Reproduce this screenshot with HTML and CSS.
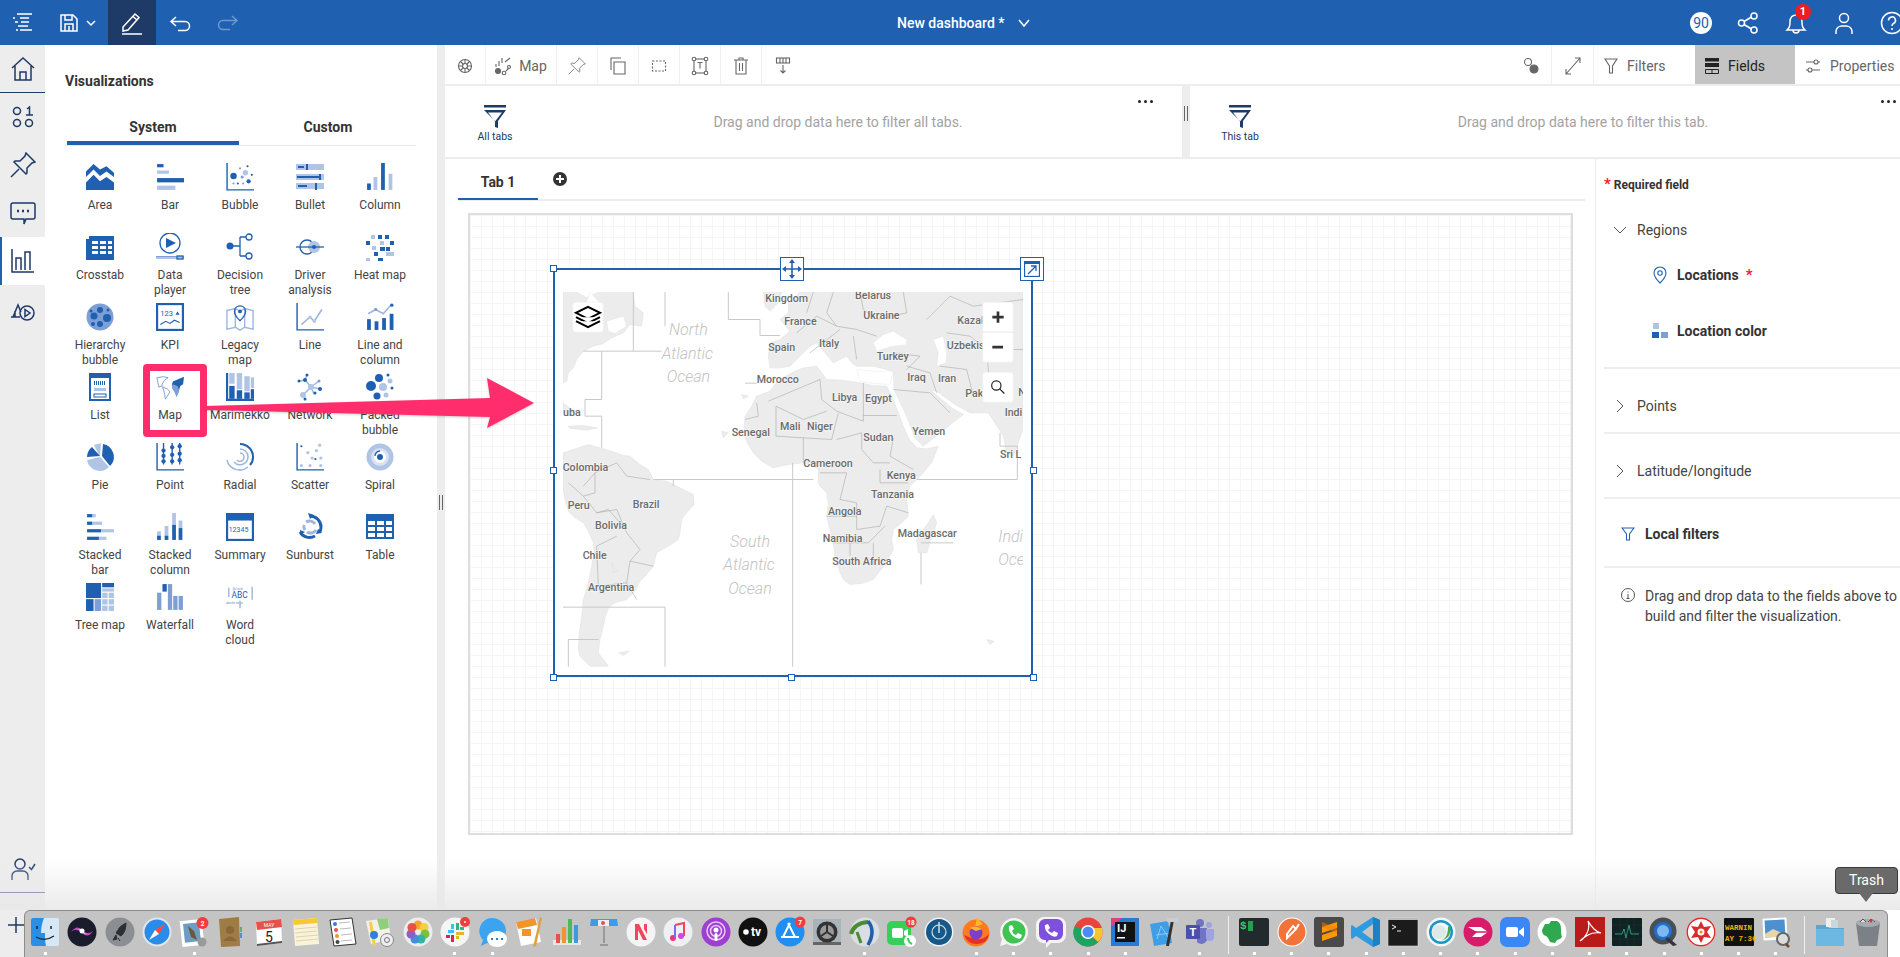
FILE: index.html
```html
<!DOCTYPE html>
<html lang="en">
<head>
<meta charset="utf-8">
<title>New dashboard</title>
<link rel="stylesheet" href="styles.css">
</head>
<body>
<div class="page">
  <header class="topbar">
    <div class="tb-left">
      <button class="hbtn w45"><svg width="24" height="24" viewBox="0 0 24 24" class="hline"><path d="M6 3h15M9 7h9M4 11h3M10 11h8M7 15h10M9 19h12M2 7h2M5 19h2"/></svg></button>
      <button class="hbtn w63"><svg width="20" height="20" viewBox="0 0 20 20" class="hline"><path d="M2 2h12l4 4v12H2zM6 2v5h7V2M6 18v-7h8v7M10 13v5"/></svg><svg width="10" height="10" viewBox="0 0 10 10" class="hline chev"><path d="M1 3l4 4 4-4"/></svg></button>
      <button class="hbtn w48 active"><svg width="24" height="24" viewBox="0 0 24 24" class="hline"><path d="M3 16L15 3l4 3.500L8 19l-5 1zM13 5.500l4 3.500M2 23h20"/></svg></button>
      <button class="hbtn w48"><svg width="22" height="22" viewBox="0 0 22 22" class="hline"><path d="M7 5L2 9.500 7 14M2 9.500h14a4 4 0 0 1 0 9H9"/></svg></button>
      <button class="hbtn w48 faded"><svg width="22" height="22" viewBox="0 0 22 22" class="hline"><path d="M15 4l5 4.500-5 4.500M20 8.500H6a4 4 0 0 0 0 9h7"/></svg></button>
    </div>
    <div class="doc-title"><span>New dashboard *</span><svg width="14" height="14" viewBox="0 0 14 14" class="hline"><path d="M2 4l5 6 5-6"/></svg></div>
    <div class="tb-right">
      <span class="quota">90</span>
      <svg width="24" height="24" viewBox="0 0 24 24" class="hline"><circle cx="5.500" cy="12" r="3"/><circle cx="18" cy="5" r="3"/><circle cx="18" cy="19" r="3"/><path d="M8 10.500l7.500-4.500M8 13.500l7.500 4.500"/></svg>
      <span class="bell"><svg width="24" height="24" viewBox="0 0 24 24" class="hline"><path d="M3 19c2-2 3-3 3-8s3-7 6-7 6 2 6 7 1 6 3 8zM9 19a3 3 0 0 0 6 0"/></svg><b class="badge">1</b></span>
      <svg width="24" height="24" viewBox="0 0 24 24" class="hline"><circle cx="12" cy="7" r="4.500"/><path d="M4 23v-3a6 6 0 0 1 6-5h4a6 6 0 0 1 6 5v3"/></svg>
      <svg width="24" height="24" viewBox="0 0 24 24" class="hline"><circle cx="12" cy="12" r="10.500"/><path d="M8.500 9.500a3.500 3.500 0 1 1 5 3c-1 .5-1.500 1-1.500 2.500M12 17v2"/></svg>
    </div>
  </header>

  <div class="body">
    <nav class="rail">
      <div class="rail-item sep"><svg width="26" height="26" viewBox="0 0 26 26" class="rline"><path d="M2 12L13 2l11 10M5 10v14h16V10M10 24v-8h6v8"/></svg></div>
      <div class="rail-item"><svg width="24" height="24" viewBox="0 0 24 24" class="rline"><circle cx="6" cy="6" r="3.500"/><circle cx="6" cy="18" r="3.500"/><circle cx="18" cy="18" r="3.500"/><path d="M16 4l2.500-2v8M15 10h7"/></svg></div>
      <div class="rail-item"><svg width="26" height="26" viewBox="0 0 26 26" class="rline"><path d="M1 25l8-8M16 1l9 9-3 1-5 5 0 5-1 1-12-12 1-1 5 0 5-5z"/></svg></div>
      <div class="rail-item"><svg width="26" height="26" viewBox="0 0 26 26" class="rline"><path d="M3 3h20a2 2 0 0 1 2 2v12a2 2 0 0 1-2 2h-7l-2 5v-5H3a2 2 0 0 1-2-2V5a2 2 0 0 1 2-2z"/><path d="M7 11h2M12 11h2M17 11h2" stroke-width="2.500"/></svg></div>
      <div class="rail-item current"><svg width="24" height="24" viewBox="0 0 24 24" class="rline"><path d="M1 0v23h22M5 21V9h5v12M14 21V3h5v18"/></svg></div>
      <div class="rail-item"><svg width="26" height="26" viewBox="0 0 26 26" class="rline"><path d="M1 21h9M3 21l5-12 3 7M5 21v-6"/><circle cx="17" cy="17" r="7"/><path d="M15 13.500l5 3.500-5 3.500z"/></svg></div>
      <div class="rail-item push sep"><svg width="26" height="26" viewBox="0 0 26 26" class="rline"><circle cx="10" cy="8" r="5"/><path d="M2 24v-4a5 5 0 0 1 5-5h6a5 5 0 0 1 5 5v4M19 11l2.500 2.500L25 8"/></svg></div>
      <div class="rail-item"><svg width="20" height="20" viewBox="0 0 20 20" class="rline"><path d="M10 2v16M2 10h16"/></svg></div>
    </nav>

    <aside class="panel">
      <h2 class="panel-title">Visualizations</h2>
      <div class="viz-tabs"><div class="viz-tab on">System</div><div class="viz-tab">Custom</div></div>
      <div class="viz-grid">
        <div class="tile"><svg viewBox="0 0 26 26" class="viz"><path class="d" d="M0 8L7 1l6 5 6-3 7 6v4l-7-5-6 4-6-6-7 7z"/><path class="d" d="M0 18l7-7 6 6 6-4 7 5v7H0z"/></svg><span>Area</span></div>
        <div class="tile"><svg viewBox="0 0 26 26" class="viz"><rect class="d" x="1" y="1" width="6" height="3"/><rect class="l" x="1" y="7" width="11" height="3"/><rect class="d" x="1" y="14" width="25" height="4"/><rect class="l" x="1" y="21" width="17" height="4"/></svg><span>Bar</span></div>
        <div class="tile"><svg viewBox="0 0 26 26" class="viz"><path class="b" d="M1 0v25h25"/><circle class="d" cx="7" cy="12" r="3"/><circle class="l" cx="18" cy="9" r="2.500"/><circle class="d" cx="21" cy="17" r="2"/><circle class="m" cx="13" cy="5" r="1"/><circle class="d" cx="20" cy="3" r="1"/><circle class="d" cx="24" cy="11" r="1"/><circle class="m" cx="15" cy="13" r="1.500"/><circle class="d" cx="11" cy="19" r="1"/><circle class="m" cx="16" cy="19" r="1"/><circle class="m" cx="7" cy="19" r="1"/></svg><span>Bubble</span></div>
        <div class="tile"><svg viewBox="0 0 28 26" class="viz"><rect class="l" x="0" y="0" width="28" height="6"/><rect class="l" x="0" y="10" width="28" height="6"/><rect class="l" x="0" y="19" width="28" height="6"/><rect class="d" x="2" y="2" width="6" height="2"/><rect class="d" x="10" y="0" width="2" height="6"/><rect class="d" x="1" y="12" width="23" height="2"/><rect class="d" x="23" y="10" width="2" height="6"/><rect class="d" x="2" y="21" width="9" height="2"/><rect class="d" x="19" y="19" width="2" height="7"/></svg><span>Bullet</span></div>
        <div class="tile"><svg viewBox="0 0 26 26" class="viz"><rect class="d" x="1" y="19" width="3.500" height="6"/><rect class="l" x="7" y="13" width="3.500" height="12"/><rect class="d" x="14" y="0" width="3.500" height="25"/><rect class="l" x="21" y="10" width="3.500" height="15"/></svg><span>Column</span></div>

        <div class="tile"><svg viewBox="0 0 28 26" class="viz"><path class="d" d="M0 5h3V2h25v24H0z"/><path class="w" d="M6 7h6v3H6zM14 7h6v3h-6zM22 7h4v3h-4zM6 12h6v3H6zM14 12h6v3h-6zM22 12h4v3h-4zM6 17h6v3H6zM14 17h6v3h-6zM22 17h4v3h-4z"/></svg><span>Crosstab</span></div>
        <div class="tile"><svg viewBox="0 0 28 28" class="viz"><circle class="b" cx="14" cy="10" r="10"/><path class="d" d="M10 5l10 5-10 5z"/><rect class="l" x="0" y="23" width="28" height="3"/><rect class="m" x="0" y="23" width="20" height="1"/><rect class="b" x="21" y="23" width="6" height="3"/></svg><span>Data<br>player</span></div>
        <div class="tile"><svg viewBox="0 0 28 28" class="viz"><circle class="d" cx="4" cy="13" r="3.500"/><circle class="b" cx="23" cy="4" r="3"/><circle class="b" cx="23" cy="23" r="3"/><path class="b" d="M4 13h10M14 4v19M14 4h6M14 23h6"/></svg><span>Decision<br>tree</span></div>
        <div class="tile"><svg viewBox="0 0 28 26" class="viz"><circle class="b" cx="11" cy="13" r="7"/><circle class="l" cx="18" cy="13" r="6"/><path class="b" d="M0 13h28"/><circle class="d" cx="18" cy="13" r="2"/></svg><span>Driver<br>analysis</span></div>
        <div class="tile"><svg viewBox="0 0 28 28" class="viz"><path class="d" d="M12 2h4v4h-4zM0 8h4v4H0zM24 8h4v4h-4zM14 14h5v4h-5zM8 19h4v4H8zM12 25h5v3h-5z"/><path class="l" d="M5 2h4v4H5zM14 8h4v4h-4zM6 13h4v4H6zM20 19h8v4h-8zM0 25h4v3H0z"/><path class="d" d="M19 2h4v4h-4zM20 14h4v4h-4z"/></svg><span>Heat map</span></div>

        <div class="tile"><svg viewBox="0 0 28 28" class="viz"><circle class="m" cx="14" cy="14" r="13.500"/><g class="d"><circle cx="14" cy="7" r="3"/><circle cx="21" cy="15" r="4"/><circle cx="8" cy="13" r="3.500"/><circle cx="14" cy="21" r="3"/><circle cx="5" cy="8" r="1.500"/><circle cx="22" cy="7" r="1.500"/><circle cx="7" cy="21" r="2"/></g></svg><span>Hierarchy<br>bubble</span></div>
        <div class="tile"><svg viewBox="0 0 26 26" class="viz"><rect class="b2" x="1" y="1" width="24" height="24"/><text x="4" y="12" class="kpi">123</text><path class="d" d="M18 11l2-3 2 3z"/><path class="b1" d="M4 20l5-3 4 2 4-3 5 2"/></svg><span>KPI</span></div>
        <div class="tile"><svg viewBox="0 0 30 28" class="viz"><path class="bl" d="M1 7l9-2 5 3 5-3 9 2v20l-9-2-5 3-5-3-9 2zM10 5v20M20 5v20"/><path class="b" d="M15 2a6 6 0 0 1 6 6c0 4-6 10-6 10S9 12 9 8a6 6 0 0 1 6-6z"/><circle class="d" cx="15" cy="8" r="2"/></svg><span>Legacy<br>map</span></div>
        <div class="tile"><svg viewBox="0 0 26 26" class="viz"><path class="b" d="M1 0v25h25"/><path class="bl" d="M5 20l8-7 4 4 7-11"/><circle class="l" cx="13" cy="13" r="1.500"/><circle class="l" cx="17" cy="17" r="1.500"/></svg><span>Line</span></div>
        <div class="tile"><svg viewBox="0 0 26 26" class="viz"><rect class="d" x="1" y="15" width="3.500" height="10"/><rect class="d" x="8" y="17" width="3.500" height="8"/><rect class="d" x="15" y="14" width="3.500" height="11"/><rect class="d" x="22" y="10" width="3.500" height="15"/><path class="bl" d="M2 10l7-4 7 4 8-9"/><circle class="d" cx="24" cy="2" r="1.500"/><circle class="m" cx="9" cy="6" r="1.500"/></svg><span>Line and<br>column</span></div>

        <div class="tile"><svg viewBox="0 0 26 28" class="viz"><rect class="b2" x="3" y="1" width="20" height="26"/><rect class="d" x="3" y="1" width="20" height="4"/><path class="d" d="M7 8h1v4H7zM9 8h1v4H9zM11 8h1v4h-1zM13 8h1v4h-1zM15 8h1v4h-1zM17 8h1v4h-1z"/><rect class="l" x="7" y="15" width="12" height="3"/><rect class="b1" x="7" y="21" width="12" height="3"/></svg><span>List</span></div>
        <div class="tile hl"><svg viewBox="0 0 30 26" class="viz"><path class="bt" d="M1 3l7-1 5 1-4 3-3 5 1 1-4 1zM7 13l5 2 3 3-3 5-2 3-1-7z"/><path class="d" d="M18 7l12-5-1 8-3 2-2 7-2 4-2-7-3-5z"/><path class="m" d="M18 10l5 2 2 4-3 8-2-5-3-5z"/></svg><span>Map</span></div>
        <div class="tile"><svg viewBox="0 0 26 26" class="viz"><path class="b2n" d="M1 0v25h25"/><rect class="l" x="3" y="0" width="5" height="10"/><rect class="d" x="3" y="12" width="5" height="12"/><rect class="l" x="10" y="0" width="5" height="15"/><rect class="d" x="10" y="16" width="5" height="8"/><rect class="l" x="17" y="3" width="5" height="14"/><rect class="d" x="17" y="18" width="5" height="6"/><rect class="l" x="23" y="4" width="3" height="10"/><rect class="d" x="23" y="15" width="3" height="9"/></svg><span>Marimekko</span></div>
        <div class="tile"><svg viewBox="0 0 26 28" class="viz"><path class="bl" d="M14 14L8 7M14 14l8-6M14 14l9 2M14 14L7 21M14 14l3 7M8 7L3 8M8 7l2-5"/><circle class="l" cx="14" cy="14" r="3"/><circle class="d" cx="8" cy="7" r="2"/><circle class="d" cx="2" cy="8" r="1.500"/><circle class="d" cx="10" cy="2" r="1.500"/><circle class="m" cx="22" cy="8" r="1.500"/><circle class="d" cx="23" cy="16" r="2"/><circle class="l" cx="6" cy="22" r="3"/><circle class="d" cx="18" cy="20" r="1.500"/><circle class="d" cx="8" cy="26" r="1.500"/></svg><span>Network</span></div>
        <div class="tile"><svg viewBox="0 0 28 28" class="viz"><circle class="d" cx="13" cy="5" r="4"/><circle class="d" cx="5" cy="13" r="5"/><circle class="l" cx="17" cy="14" r="4"/><circle class="d" cx="11" cy="23" r="3.500"/><circle class="l" cx="24" cy="8" r="2.500"/><circle class="d" cx="22" cy="2" r="1.500"/><circle class="d" cx="26" cy="15" r="1.500"/><circle class="l" cx="20" cy="22" r="2.500"/></svg><span>Packed<br>bubble</span></div>

        <div class="tile"><svg viewBox="0 0 28 28" class="viz"><path class="l" d="M14 14L8 2a13 13 0 0 1 7-1.500zM14 14L1 17a13 13 0 0 0 22 7z"/><path class="d" d="M17 1a13 13 0 0 1 7 22L16 13zM14 13L6 4A13 13 0 0 0 1 14z"/></svg><span>Pie</span></div>
        <div class="tile"><svg viewBox="0 0 26 26" class="viz"><path class="b" d="M1 0v25h25M7 0v20M15 0v20M22 0v20"/><g class="d"><circle cx="7" cy="7" r="2"/><circle cx="7" cy="12" r="2"/><circle cx="7" cy="17" r="2"/><circle cx="15" cy="4" r="2"/><circle cx="15" cy="11" r="2"/><circle cx="15" cy="17" r="2"/><circle cx="22" cy="3" r="2"/><circle cx="22" cy="10" r="2"/><circle cx="22" cy="16" r="2"/></g></svg><span>Point</span></div>
        <div class="tile"><svg viewBox="0 0 28 28" class="viz"><path class="b2n" d="M14 1a13 13 0 0 1 13 13c0 3-1 6-3 8"/><path class="bl" d="M22 24A13 13 0 0 1 1 17M14 6a8 8 0 0 1 8 8 8 8 0 0 1-14 5M14 10a4 4 0 0 1 4 4 4 4 0 0 1-7 3"/></svg><span>Radial</span></div>
        <div class="tile"><svg viewBox="0 0 26 26" class="viz"><path class="b" d="M1 0v25h25"/><g class="l"><circle cx="22" cy="2" r="1.500"/><circle cx="11" cy="9" r="1.500"/><circle cx="19" cy="7" r="1.500"/><circle cx="15" cy="14" r="1.500"/><circle cx="23" cy="14" r="1.500"/><circle cx="5" cy="21" r="1.500"/><circle cx="13" cy="21" r="1.500"/><circle cx="23" cy="21" r="1.500"/></g><g class="d"><circle cx="5" cy="3" r="1"/><circle cx="18" cy="15" r="1"/></g></svg><span>Scatter</span></div>
        <div class="tile"><svg viewBox="0 0 28 28" class="viz"><circle class="l" cx="14" cy="14" r="13.500"/><circle class="ws" cx="14" cy="14" r="9"/><circle class="w" cx="14" cy="14" r="6"/><circle class="d" cx="14" cy="14" r="3"/><path class="b" d="M9 13a5 5 0 0 1 5-5"/></svg><span>Spiral</span></div>

        <div class="tile"><svg viewBox="0 0 26 26" class="viz"><rect class="d" x="1" y="1" width="5" height="3"/><rect class="l" x="6" y="1" width="3" height="3"/><rect class="d" x="1" y="8" width="5" height="3"/><rect class="l" x="6" y="8" width="9" height="3"/><rect class="d" x="1" y="15" width="13" height="3"/><rect class="l" x="14" y="15" width="12" height="3"/><rect class="d" x="1" y="22" width="11" height="3"/><rect class="l" x="12" y="22" width="7" height="3"/></svg><span>Stacked<br>bar</span></div>
        <div class="tile"><svg viewBox="0 0 26 26" class="viz"><rect class="l" x="1" y="17" width="3.500" height="4"/><rect class="d" x="1" y="21" width="3.500" height="4"/><rect class="l" x="8" y="12" width="3.500" height="9"/><rect class="d" x="8" y="21" width="3.500" height="4"/><rect class="l" x="15" y="0" width="3.500" height="11"/><rect class="d" x="15" y="11" width="3.500" height="14"/><rect class="l" x="21" y="7" width="3.500" height="7"/><rect class="d" x="21" y="14" width="3.500" height="11"/></svg><span>Stacked<br>column</span></div>
        <div class="tile"><svg viewBox="0 0 26 26" class="viz"><rect class="b2" x="1" y="1" width="24" height="24"/><rect class="d" x="1" y="1" width="24" height="6"/><text x="2.500" y="18" class="sumnum">12345</text></svg><span>Summary</span></div>
        <div class="tile"><svg viewBox="0 0 28 28" class="viz"><path class="b3" d="M14 3a11 11 0 0 1 11 11c0 2-.5 4-1.500 5M4 19a11 11 0 0 0 15 4"/><path class="bl3" d="M10 9a6.500 6.500 0 0 1 9 2M20 17a6.500 6.500 0 0 1-9 2M9 17a6 6 0 0 1-1-5"/><path class="d" d="M12 0l6 2-4 4zM22 16l4 4-6 1zM4 17l5 2-5 3z"/></svg><span>Sunburst</span></div>
        <div class="tile"><svg viewBox="0 0 28 26" class="viz"><path class="d" d="M0 0h28v25H0z"/><path class="w" d="M2 7h7v4H2zM11 7h7v4h-7zM20 7h6v4h-6zM2 13h7v4H2zM11 13h7v4h-7zM20 13h6v4h-6zM2 19h7v4H2zM11 19h7v4h-7zM20 19h6v4h-6z"/></svg><span>Table</span></div>

        <div class="tile"><svg viewBox="0 0 26 26" class="viz"><rect class="d" x="0" y="0" width="14" height="14"/><rect class="d" x="15" y="0" width="11" height="4"/><rect class="l" x="15" y="5" width="11" height="3"/><rect class="l" x="15" y="9" width="5" height="5"/><rect class="l" x="21" y="9" width="5" height="5"/><rect class="d" x="0" y="15" width="7" height="11"/><rect class="m" x="8" y="15" width="6" height="11"/><rect class="l" x="15" y="15" width="5" height="5"/><rect class="l" x="21" y="15" width="5" height="5"/><rect class="l" x="15" y="21" width="5" height="5"/><rect class="l" x="21" y="21" width="5" height="5"/></svg><span>Tree map</span></div>
        <div class="tile"><svg viewBox="0 0 26 26" class="viz"><rect class="m" x="1" y="9" width="4" height="16"/><rect class="d" x="6" y="1" width="4" height="7"/><rect class="m" x="11" y="1" width="4" height="24"/><rect class="m" x="16" y="12" width="4" height="13"/><rect class="m" x="21" y="12" width="4" height="13"/></svg><span>Waterfall</span></div>
        <div class="tile"><svg viewBox="0 0 30 26" class="viz"><text x="6" y="14" class="abc">ABC</text><text x="7" y="5" class="tiny">ijkl qrst</text><text x="0" y="20" class="tiny">abcde wxyz</text><path class="bl" d="M3 3v10M28 2v14M15 17v8"/></svg><span>Word<br>cloud</span></div>
      </div>
    </aside>

    <div class="gutter"><i class="grip"></i></div>

    <main class="main">
      <div class="toolbar">
        <div class="tool w40"><svg width="16" height="16" viewBox="0 0 16 16" class="tline"><circle cx="8" cy="8" r="6.500"/><circle cx="8" cy="8" r="2.500"/><path d="M8 1.500v4M8 10.500v4M1.500 8h4M10.500 8h4M3.500 3.500l3 3M9.500 9.500l3 3M12.500 3.500l-3 3M6.500 9.500l-3 3"/></svg></div>
        <div class="tool w72"><svg width="16" height="20" viewBox="0 0 16 20" class="tline"><path d="M1 8v3M4 5v5M7 2v5M10 6l5-4M11 15l3-3"/><circle class="tfill" cx="3" cy="15" r="2.500"/><circle cx="9" cy="17" r="1.800"/><circle cx="14" cy="11" r="1.500"/></svg><span>Map</span></div>
        <div class="tool w41"><svg width="18" height="18" viewBox="0 0 26 26" class="tline"><path d="M1 25l8-8M16 1l9 9-3 1-5 5 0 5-1 1-12-12 1-1 5 0 5-5z"/></svg></div>
        <div class="tool w41"><svg width="16" height="18" viewBox="0 0 16 18" class="tline"><path d="M1 13V1h10M4 5h11v12H4z"/></svg></div>
        <div class="tool w41"><svg width="16" height="16" viewBox="0 0 16 16" class="tline"><rect x="1.500" y="3" width="13" height="10" stroke-dasharray="2 1.500"/></svg></div>
        <div class="tool w41"><svg width="18" height="20" viewBox="0 0 18 20" class="tline"><rect x="3" y="3" width="12" height="14"/><circle class="w" cx="3" cy="3" r="1.800"/><circle class="w" cx="15" cy="3" r="1.800"/><circle class="w" cx="3" cy="17" r="1.800"/><circle class="w" cx="15" cy="17" r="1.800"/><path d="M6.500 6.500h5M9 6.500v6"/></svg></div>
        <div class="tool w41"><svg width="16" height="18" viewBox="0 0 16 18" class="tline"><path d="M1 3h14M6 3V1h4v2M3 3v14h10V3M6.500 6v8M9.500 6v8"/></svg></div>
        <div class="tool w41 nob"><svg width="16" height="18" viewBox="0 0 16 18" class="tline"><rect x="1.500" y="1" width="13" height="5"/><path d="M5 1v5M8 1v5M11 1v5M8 8v8M5.500 13.500L8 16l2.500-2.500"/></svg></div>
        <div class="tool-gap"></div>
        <div class="tool w41 lb"><svg width="16" height="18" viewBox="0 0 16 18" class="tline"><circle cx="5" cy="5" r="3.500"/><circle class="tfill" cx="11" cy="12" r="4"/></svg></div>
        <div class="tool w42b"><svg width="16" height="20" viewBox="0 0 16 20" class="tline"><path d="M1 18L15 2M10 2h5v5M1 13v5h5"/></svg></div>
        <div class="tool txt w101"><svg width="14" height="18" viewBox="0 0 14 18" class="tline"><path d="M1 2h12L8.500 9v7h-3V9z"/></svg><span>Filters</span></div>
        <div class="tool txt w100 sel"><svg width="14" height="18" viewBox="0 0 14 18"><rect class="k" x="0" y="1" width="14" height="3.500"/><rect class="k" x="0" y="6" width="14" height="4"/><path class="ko" d="M.5 12.500h13v4H.5zM7 12.500v4"/></svg><span>Fields</span></div>
        <div class="tool txt w105"><svg width="16" height="18" viewBox="0 0 16 18" class="tline"><path d="M1 5h8M13 5h2M1 13h2M7 13h8"/><circle cx="11" cy="5" r="2"/><circle cx="5" cy="13" r="2"/></svg><span>Properties</span></div>
      </div>

      <div class="filters">
        <section class="fzone fz-left">
          <div class="flabel"><svg width="22" height="23" viewBox="0 0 22 23" class="funnel"><rect x="0" y="0" width="22" height="2.500"/><path d="M0 5h22l-8 11v7l-3-1 0-6zM4 7.500l7 9 7-9z" fill-rule="evenodd"/></svg><span>All tabs</span></div>
          <div class="fhint">Drag and drop data here to filter all tabs.</div>
          <div class="dots"><i></i><i></i><i></i></div>
        </section>
        <div class="fgutter"><i class="grip"></i></div>
        <section class="fzone fz-right">
          <div class="flabel"><svg width="22" height="23" viewBox="0 0 22 23" class="funnel"><rect x="0" y="0" width="22" height="2.500"/><path d="M0 5h22l-8 11v7l-3-1 0-6zM4 7.500l7 9 7-9z" fill-rule="evenodd"/></svg><span>This tab</span></div>
          <div class="fhint">Drag and drop data here to filter this tab.</div>
          <div class="dots"><i></i><i></i><i></i></div>
        </section>
      </div>

      <div class="work">
        <div class="stage">
          <div class="tabbar">
            <div class="tab">Tab 1</div>
            <svg width="14" height="14" viewBox="0 0 14 14" class="addtab"><circle class="plusbg" cx="7" cy="7" r="7"/><path class="plusfg" d="M7 3v8M3 7h8"/></svg>
          </div>
          <div class="canvas">
            <div class="widget">
              <svg class="map" viewBox="69 108 1380 1124" width="460" height="375">
                <g class="land">
                  <path d="M69 108H110L140 125L175 108H280L285 150L310 170L305 210L270 205L250 230L215 245L190 262L160 270L130 285L110 310L100 335L85 350L80 375L69 380Z"/>
                  <path d="M69 590L100 580L145 565L180 575L215 585L250 598L270 600L300 625L325 640L340 670L380 675L400 685L430 700L460 715L462 745L440 770L425 790L420 830L415 850L385 870L350 890L345 910L340 930L315 960L300 975L285 1005L260 1030L225 1040L205 1055L195 1085L190 1110L180 1150L175 1190L205 1230H150L120 1200L115 1180L118 1130L125 1080L130 1030L145 980L155 930L162 890L160 860L145 825L130 800L105 785L85 765L75 730L69 700Z"/>
                  <path d="M615 480L635 450L650 420L670 412L690 405L705 385L720 370L755 350L790 335L830 330L845 350L860 370L905 372L950 378L1000 388L1040 390L1050 410L1060 430L1075 470L1090 510L1105 545L1130 575L1160 578L1195 570L1185 595L1175 620L1145 655L1110 690L1100 730L1105 780L1085 800L1060 820L1055 850L1060 880L1035 925L1000 970L965 982L930 985L910 970L900 950L885 900L880 860L870 820L860 780L865 745L860 710L840 690L835 680L835 640L815 628L790 620L745 625L700 635L665 615L640 590L622 560L612 530Z"/>
                  <path d="M1180 775L1190 800L1175 845L1160 890L1135 890L1130 850L1150 820L1165 800Z"/>
                  <path d="M745 140L780 108H1449V520L1420 600L1400 590L1390 540L1345 470L1290 470L1245 445L1190 405L1170 400L1235 455L1270 475L1225 510L1150 570L1125 545L1100 480L1062 400L1060 345L1000 330L950 330L935 320L920 300L900 310L880 320L855 290L830 260L810 270L790 290L770 310L750 330L720 335H690L685 300L690 260L720 250L750 225L720 190L745 170Z"/>
                  <path d="M670 108H725L715 140L690 165L675 150Z"/>
                  <path d="M69 440L95 460L120 470L100 480L69 470Z"/>
                  <path d="M85 510L130 508L172 515L140 522L90 516Z"/>
                  <path d="M215 920L232 945L220 950Z"/>
                  <path d="M235 1190L268 1185L250 1198Z"/>
                  <path d="M1340 1150L1362 1155L1350 1165Z"/>
                  <path d="M605 415L625 420L610 428Z"/>
                  <path d="M545 525L565 530L550 545Z"/>
                </g>
                <g class="holes">
                  <path d="M1000 260L1030 235L1060 225L1100 250L1100 265L1050 272L1010 285Z"/>
                  <path d="M1180 250L1210 240L1220 290L1218 320L1190 330L1195 290Z"/>
                  <path d="M950 340L1000 345L1060 345L1050 385L1000 382L960 375Z"/>
                  <path d="M200 195L250 180L260 210L225 232L205 225Z"/>
                  <path d="M150 108L190 150L175 180L135 150Z"/>
                </g>
                <g class="borders">
                  <path d="M685 435L840 370M840 370L845 430L890 465L970 495L970 380M970 478H1070M708 450V540L790 545L875 550L895 470M708 450L790 490L860 465M650 440L655 480L615 490M790 545L790 620M890 550L965 530L965 580L1000 620L1050 620M1060 545L1050 600L1120 640M1020 640L1020 680L1105 680M840 650H920L900 730L950 740L950 820L1020 810L1040 750L1105 770M860 780H950M880 860L985 860L1035 810M930 860V900M1000 860L1000 925"/>
                  <path d="M130 690L165 650L230 620L260 660L330 670M165 650V710L130 720M85 680L130 720L170 770L230 760L260 830L300 880L270 915L340 930M230 840L170 870L175 990L260 980L270 915M170 770L205 760L258 820M260 980L290 1030"/>
                  <path d="M770 230L830 180L890 210L950 220L1010 240M880 108L860 170L890 210M960 108L970 160L1010 190L1100 170M1160 190L1230 120L1300 150L1449 130M1220 230L1290 240L1340 280L1449 280M1100 330L1170 350L1190 410M1060 400L1170 410L1230 470M1200 330L1280 340L1300 420M810 290L900 220M940 240L950 310M1340 280L1350 400M820 108L800 170M1090 108L1100 170M1060 290L1140 300L1100 340"/>
                </g>
                <path class="seas" d="M375 108V210M280 108V285M130 285H365M185 285V430H135V480H185V575M565 108V190H660V238H720M340 670H820M758 620V1232M1130 670H1432V570M1380 530V570H1432M1143 890V985M1143 860H1240M69 1053H375V1232M85 1232V1150H175M400 670V690M615 381H650"/>
                <g class="mlabel">
                  <text x="676" y="137">Kingdom</text><text x="945" y="130">Belarus</text><text x="733" y="207">France</text><text x="970" y="188">Ukraine</text><text x="1252" y="203">Kazak</text><text x="685" y="286">Spain</text><text x="837" y="272">Italy</text><text x="1010" y="311">Turkey</text><text x="1220" y="280">Uzbekis</text><text x="650" y="381">Morocco</text><text x="1102" y="375">Iraq</text><text x="1194" y="379">Iran</text><text x="1276" y="422">Pak</text><text x="1435" y="421">N</text><text x="876" y="434">Libya</text><text x="975" y="439">Egypt</text><text x="1394" y="479">Indi</text><text x="69" y="481">uba</text><text x="575" y="541">Senegal</text><text x="720" y="522">Mali</text><text x="801" y="522">Niger</text><text x="970" y="554">Sudan</text><text x="1117" y="536">Yemen</text><text x="1380" y="607">Sri L</text><text x="68" y="646">Colombia</text><text x="790" y="632">Cameroon</text><text x="1040" y="669">Kenya</text><text x="993" y="727">Tanzania</text><text x="278" y="755">Brazil</text><text x="83" y="760">Peru</text><text x="864" y="778">Angola</text><text x="165" y="820">Bolivia</text><text x="848" y="858">Namibia</text><text x="1073" y="843">Madagascar</text><text x="877" y="926">South Africa</text><text x="128" y="910">Chile</text><text x="144" y="1005">Argentina</text>
                </g>
                <g class="ocean">
                  <text x="387" y="238">North</text><text x="365" y="308">Atlantic</text><text x="380" y="378">Ocean</text><text x="570" y="873">South</text><text x="550" y="943">Atlantic</text><text x="565" y="1013">Ocean</text><text x="1375" y="857">Indi</text><text x="1375" y="927">Oce</text>
                </g>
                <rect class="mbtn" x="98" y="138" width="92" height="90" rx="9"/>
                <g class="lyr"><path d="M144 152L180 170L144 188L108 170Z"/><path d="M108 183L144 201L180 183"/><path d="M108 195L144 213L180 195"/></g>
                <rect class="mbtn" x="1328" y="138" width="92" height="180" rx="9"/>
                <path class="msep" d="M1328 228H1420"/>
                <path class="mzoom" d="M1374 166V200M1357 183H1391M1357 273H1389"/>
                <rect class="mbtn" x="1328" y="348" width="92" height="90" rx="9"/>
                <circle class="msearch" cx="1369" cy="388" r="14"/><path class="msearch" d="M1379 398L1393 412"/>
              </svg>
              <i class="h h1"></i><i class="h h2"></i><i class="h h3"></i><i class="h h4"></i><i class="h h5"></i><i class="h h6"></i>
              <span class="wbtn move"><svg width="20" height="20" viewBox="0 0 20 20" class="wmove"><path d="M10 1v18M1 10h18"/><path class="wh" d="M10 0l3 4H7zM10 20l-3-4h6zM0 10l4-3v6zM20 10l-4 3V7z"/></svg></span>
              <span class="wbtn expand"><svg width="16" height="16" viewBox="0 0 16 16" class="wexp"><rect x=".5" y=".5" width="15" height="15"/><rect class="wf" x="0" y="0" width="16" height="3"/><path d="M4 13L12 5M7 5h5v5"/></svg></span>
            </div>
          </div>
        </div>

        <aside class="fields">
          <div class="req"><b class="star">*</b> Required field</div>
          <div class="sect open">
            <div class="sect-h"><svg width="14" height="14" viewBox="0 0 14 14" class="fline"><path d="M1 4l6 6 6-6"/></svg><span>Regions</span></div>
            <div class="slot s1"><svg width="14" height="18" viewBox="0 0 14 18" class="blue"><path d="M7 1a6 6 0 0 1 6 6c0 4-6 10-6 10S1 11 1 7a6 6 0 0 1 6-6z"/><circle cx="7" cy="7" r="2.200"/></svg><b>Locations</b><b class="star st2">*</b></div>
            <div class="slot s2"><svg width="16" height="16" viewBox="0 0 16 16"><rect class="l" x="1" y="0" width="6" height="6"/><rect class="d" x="0" y="9" width="7" height="6"/><rect class="m" x="9" y="9" width="7" height="6"/></svg><b>Location color</b></div>
          </div>
          <div class="sect"><div class="sect-h"><svg width="14" height="14" viewBox="0 0 14 14" class="fline"><path d="M4 1l6 6-6 6"/></svg><span>Points</span></div></div>
          <div class="sect"><div class="sect-h"><svg width="14" height="14" viewBox="0 0 14 14" class="fline"><path d="M4 1l6 6-6 6"/></svg><span>Latitude/longitude</span></div></div>
          <div class="sect local"><svg width="14" height="14" viewBox="0 0 14 14" class="blue"><path d="M1 1h12L8.500 7v6h-3V7z"/></svg><b>Local filters</b></div>
          <div class="info"><svg width="14" height="14" viewBox="0 0 14 14" class="fline"><circle cx="7" cy="7" r="6.500"/><path d="M7 6v4.500M5.500 10.500h3M7 3.500v1"/></svg><p>Drag and drop data to the fields above to build and filter the visualization.</p></div>
        </aside>
      </div>
    </main>
  </div>

  <svg class="arrow" width="350" height="60" viewBox="0 0 350 60"><path d="M10 34L295 26L292 6L339 31L292 56L295 45L10 38Z"/></svg>

  <div class="fade"></div>
  <div class="dock">
    <span class="di run"><svg viewBox="0 0 30 30"><rect x="1" y="1" width="28" height="28" rx="2" fill="#d6e8f6"/><path d="M1 3a2 2 0 0 1 2-2h11c-2 5-3 10-3 15h4c0 5 0 9 1 13H3a2 2 0 0 1-2-2z" fill="#2a8fe4"/><path d="M7 9v3M21 9v3" stroke="#222" stroke-width="1.500"/><path d="M6 20q9 5 18-1" stroke="#222" fill="none" stroke-width="1.200"/></svg></span>
    <span class="di"><svg viewBox="0 0 30 30"><circle cx="15" cy="15" r="14.500" fill="#1b1b2e"/><path d="M4 15q6-8 11-2t11 1q-5 8-11 2t-11-1z" fill="#c94bc0"/><path d="M8 15q5-6 8-1t7 0q-4 6-8 1t-7 0z" fill="#6fd5ee"/><circle cx="15" cy="14" r="2.500" fill="#fff"/></svg></span>
    <span class="di"><svg viewBox="0 0 30 30"><circle cx="15" cy="15" r="14.500" fill="#8b8f94"/><path d="M21 6q0 9-5 13l-5-3q4-8 10-10zM11 18l-3 5 4-1zM13 21l2 3" fill="#2c2f33" stroke="#2c2f33"/></svg></span>
    <span class="di"><svg viewBox="0 0 30 30"><circle cx="15" cy="15" r="14.500" fill="#dfe6ee"/><circle cx="15" cy="15" r="12.500" fill="#2b8be8"/><path d="M23 7L13 13l4 4z" fill="#ff4a3d"/><path d="M7 23l6-10 4 4z" fill="#fff"/></svg></span>
    <span class="di run"><svg viewBox="0 0 30 30"><rect x="2" y="3" width="22" height="26" fill="#fff" transform="rotate(-6 13 16)"/><rect x="5" y="6" width="16" height="19" fill="#6f9cc4" transform="rotate(-6 13 16)"/><path d="M9 9l6 5 3 9-6-3z" fill="#6b5a3a"/><circle cx="23" cy="25" r="4.500" fill="#9a9a9a"/><circle cx="23.500" cy="6" r="6" fill="#f23d3d"/><text x="23.500" y="9" class="dbadge">2</text></svg></span>
    <span class="di"><svg viewBox="0 0 30 30"><path d="M3 2l20-2 1 29-19 1z" fill="#a07b45"/><circle cx="14" cy="13" r="4" fill="#8a6836"/><path d="M7 24q7-9 14 0z" fill="#8a6836"/><rect x="24" y="10" width="2" height="5" fill="#52b46d"/><rect x="24" y="16" width="2" height="5" fill="#4e93d1"/></svg></span>
    <span class="di"><svg viewBox="0 0 30 30"><path d="M2 5l25-3 1 24-25 3z" fill="#fff"/><path d="M2 5l25-3 1 8-25 3z" fill="#e8504a"/><path d="M3 27l25-3v2l-25 3z" fill="#555"/><text x="15" y="10" class="cal1">MAY</text><text x="15" y="25" class="cal2">5</text></svg></span>
    <span class="di"><svg viewBox="0 0 30 30"><path d="M2 3l24-2 2 26-24 2z" fill="#f8f3d9"/><path d="M2 3l24-2 .5 5-24 2z" fill="#f7c92f"/><path d="M4 12l22-2M4 16l22-2M5 20l22-2M5 24l22-2" stroke="#ddd6b0"/></svg></span>
    <span class="di"><svg viewBox="0 0 30 30"><path d="M2 3l22-2 4 26-22 2z" fill="#fff" stroke="#333"/><circle cx="7" cy="7" r="2" fill="#3478f6"/><circle cx="8" cy="13" r="2" fill="#e8504a"/><circle cx="9" cy="19" r="2" fill="#f0952b"/><circle cx="9.500" cy="25" r="2" fill="#444"/><path d="M11 6l11-1M12 12l11-1M13 18l11-1M13 24l11-1" stroke="#bbb"/></svg></span>
    <span class="di"><svg viewBox="0 0 30 30"><path d="M1 4l22-3 3 22-20 4z" fill="#f3f0e6"/><path d="M12 2l11-1 1 10-9 2z" fill="#8fcf7c"/><path d="M7 5l4 24-3 0L4 5z" fill="#f6ce45"/><circle cx="9" cy="18" r="4" fill="#2f7fe0"/><circle cx="22" cy="23" r="6.500" fill="#eee" stroke="#888"/><circle cx="22" cy="23" r="2.500" fill="none" stroke="#777"/></svg></span>
    <span class="di"><svg viewBox="0 0 30 30"><circle cx="15" cy="15" r="14.500" fill="#ececec"/><circle cx="15" cy="8" r="4.500" fill="#f6a623"/><circle cx="21" cy="10.500" r="4.500" fill="#f4d03f"/><circle cx="22" cy="17" r="4.500" fill="#7ac143"/><circle cx="18" cy="22" r="4.500" fill="#2fb5a0"/><circle cx="12" cy="22" r="4.500" fill="#3f8fe0"/><circle cx="8" cy="17" r="4.500" fill="#8a5fc7"/><circle cx="9" cy="10.500" r="4.500" fill="#e8504a"/></svg></span>
    <span class="di run"><svg viewBox="0 0 30 30"><circle cx="15" cy="15" r="14.500" fill="#f5f5f5"/><path d="M8 13h6v3H8zM11 7h3v5h-3z" fill="#36c5f0"/><path d="M16 6h3v7h-3zM20 10h4v3h-4z" fill="#2eb67d"/><path d="M16 15h8v3h-8zM16 19h3v3h-3z" fill="#ecb22e"/><path d="M11 18h3v7h-3zM6 18h4v3H6z" fill="#e01e5a"/><circle cx="25" cy="5" r="5" fill="#f23d3d"/><circle cx="25" cy="5" r="1" fill="#fff"/></svg></span>
    <span class="di run"><svg viewBox="0 0 30 30"><path d="M15 1a14 13 0 0 1 14 13c0 7-6 13-14 13q-3 0-5-1l-6 3 2-6a13 13 0 0 1 9-22z" fill="#3ba3f0"/><ellipse cx="20" cy="22" rx="10" ry="8" fill="#fff"/><path d="M14 22h2M19 22h2M24 22h2" stroke="#2c7fd0" stroke-width="2"/></svg></span>
    <span class="di"><svg viewBox="0 0 30 30"><path d="M2 5l20-4 5 24-20 4z" fill="#fff"/><path d="M2 5l19-4 2 7-19 4z" fill="#f0952b"/><rect x="8" y="12" width="9" height="7" fill="#f0952b"/><path d="M26 0l2 1-6 28-3 1z" fill="#e2a13b"/></svg></span>
    <span class="di"><svg viewBox="0 0 30 30"><rect x="1" y="23" width="28" height="5" fill="#e7e7e7"/><rect x="4" y="17" width="4" height="9" fill="#e8504a"/><rect x="10" y="10" width="4" height="16" fill="#f0952b"/><rect x="16" y="2" width="4" height="24" fill="#4fb956"/><rect x="22" y="8" width="4" height="18" fill="#3e9ae0"/></svg></span>
    <span class="di"><svg viewBox="0 0 30 30"><path d="M2 2h26l1 7H1z" fill="#3d9be9"/><rect x="9" y="3" width="11" height="6" fill="#e9eef3"/><circle cx="14" cy="6" r="2" fill="#e8504a"/><path d="M15 9v17M11 28h8" stroke="#999" stroke-width="2"/></svg></span>
    <span class="di"><svg viewBox="0 0 30 30"><circle cx="15" cy="15" r="14.500" fill="#f4f4f4"/><path d="M9 7h4l8 16h-4zM9 7v16h3V13zM21 7v10l-3-5V7z" fill="#f0455a"/></svg></span>
    <span class="di"><svg viewBox="0 0 30 30"><circle cx="15" cy="15" r="14.500" fill="#eef0f4"/><path d="M12 8l9-2v13" fill="none" stroke="#f0455a" stroke-width="2"/><circle cx="10" cy="21" r="3" fill="#e93a6f"/><circle cx="18" cy="19" r="3" fill="#c74bdc"/><path d="M12 8v13" stroke="#7c6cf0" stroke-width="2"/></svg></span>
    <span class="di"><svg viewBox="0 0 30 30"><circle cx="15" cy="15" r="14.500" fill="#9d3fd1"/><circle cx="15" cy="14" r="9" fill="none" stroke="#e7c8f6" stroke-width="1.500"/><circle cx="15" cy="14" r="5.500" fill="none" stroke="#e7c8f6" stroke-width="1.500"/><circle cx="15" cy="13" r="2.500" fill="#fff"/><rect x="13.500" y="16" width="3" height="8" rx="1.500" fill="#fff"/></svg></span>
    <span class="di"><svg viewBox="0 0 30 30"><circle cx="15" cy="15" r="14.500" fill="#111"/><circle cx="8" cy="15" r="2.800" fill="#fff"/><text x="18" y="19" class="tv">tv</text></svg></span>
    <span class="di"><svg viewBox="0 0 30 30"><circle cx="15" cy="15" r="14.500" fill="#1f8ff2"/><path d="M15 6l-7 14M13 6l7 14M6 20h18" stroke="#fff" stroke-width="2" fill="none"/><circle cx="25" cy="5" r="5.500" fill="#f23d3d"/><text x="25" y="8" class="dbadge">7</text></svg></span>
    <span class="di"><svg viewBox="0 0 30 30"><rect x="1" y="2" width="28" height="26" fill="#a9b3ba"/><rect x="1" y="25" width="28" height="3" fill="#666"/><circle cx="15" cy="15" r="10.500" fill="#333"/><circle cx="15" cy="15" r="7" fill="#999"/><path d="M15 15V8M15 15l6 4M15 15l-6 4" stroke="#333" stroke-width="2"/></svg></span>
    <span class="di run"><svg viewBox="0 0 30 30"><circle cx="15" cy="15" r="14.500" fill="#d9dee2"/><path d="M1 17Q4 6 18 5" stroke="#4c8a36" stroke-width="4" fill="none"/><path d="M18 4q8 10 0 24" stroke="#235ea6" stroke-width="3.500" fill="none"/><path d="M7 15l4 11" stroke="#4c8a36" stroke-width="3"/></svg></span>
    <span class="di"><svg viewBox="0 0 30 30"><rect x="0" y="4" width="24" height="24" rx="5" fill="#34d058"/><rect x="5" y="11" width="11" height="10" rx="2" fill="#fff"/><path d="M17 14l4-2v8l-4-2z" fill="#fff"/><circle cx="23" cy="24" r="6" fill="#fff"/><path d="M21 21q0 4 4 6" stroke="#34d058" stroke-width="2" fill="none"/><circle cx="24" cy="5" r="5.500" fill="#f23d3d"/><text x="24" y="8" class="dbadge">18</text></svg></span>
    <span class="di"><svg viewBox="0 0 30 30"><circle cx="15" cy="15" r="14.500" fill="#f1f1f1"/><circle cx="15" cy="15" r="13" fill="#165988"/><circle cx="15" cy="15" r="7" fill="none" stroke="#cfe1ee" stroke-width="1.200"/><path d="M15 5v11" stroke="#cfe1ee" stroke-width="1.500"/></svg></span>
    <span class="di run"><svg viewBox="0 0 30 30"><circle cx="15" cy="16" r="13.500" fill="#ff7a1c"/><path d="M16 0q3 5 6 7l-8 3z" fill="#ffb52e"/><path d="M3 18q4 10 14 9t11-10q-5 6-12 5t-13-4z" fill="#e6312b"/><circle cx="15" cy="16" r="6.500" fill="#7a3fd0"/><path d="M9 11q6-3 12 1l-6 2z" fill="#ffb52e"/></svg></span>
    <span class="di run"><svg viewBox="0 0 30 30"><path d="M15 1a14 14 0 0 1 0 28q-4 0-7-2l-7 2 2-7A14 14 0 0 1 15 1z" fill="#f4f4f4"/><circle cx="15" cy="15" r="11.500" fill="#3fc351"/><path d="M10 9l3-1 2 4-2 2q1 3 4 4l2-2 4 2-1 3q-3 2-8-2t-4-10z" fill="#fff"/></svg></span>
    <span class="di run"><svg viewBox="0 0 30 30"><path d="M8 0h14a8 8 0 0 1 8 8v10a8 8 0 0 1-8 8h-7l-5 5v-5a8 8 0 0 1-10-8V8a8 8 0 0 1 8-8z" fill="#f4f4f4"/><path d="M9 2h12a6 6 0 0 1 6 6v9a6 6 0 0 1-6 6h-8l-3 3v-3a6 6 0 0 1-7-6V8a6 6 0 0 1 6-6z" fill="#7d51dc"/><path d="M9 8l3-1 2 4-2 2q1 2 4 3l2-2 4 2-1 3q-3 2-8-2T9 8z" fill="#fff"/></svg></span>
    <span class="di run"><svg viewBox="0 0 30 30"><circle cx="15" cy="15" r="14.500" fill="#e8453c"/><path d="M15 15L2.500 23A14.500 14.500 0 0 1 2 9z" fill="#1da462"/><path d="M15 15L2.500 23A14.500 14.500 0 0 0 25 25z" fill="#1da462"/><path d="M15 15L25 25A14.500 14.500 0 0 0 29 11H15z" fill="#f7c52c"/><circle cx="15" cy="15" r="7" fill="#fff"/><circle cx="15" cy="15" r="5.500" fill="#4c8bf5"/></svg></span>
    <span class="di run"><svg viewBox="0 0 30 30"><rect x="1" y="1" width="28" height="28" fill="#2a7ad2"/><path d="M1 29V10L12 1H1z" fill="#e0417e"/><rect x="5" y="5" width="20" height="20" fill="#111"/><text x="7" y="15" class="ij">IJ</text><rect x="7" y="20" width="8" height="1.500" fill="#fff"/></svg></span>
    <span class="di"><svg viewBox="0 0 30 30"><path d="M2 7l18-3 4 22-18 3z" fill="#3f9ee8"/><path d="M9 22l4-13 7 11M8 18l14-2" stroke="#8cc8f2" fill="none"/><path d="M26 3L21 29h-3l5-26z" fill="#333"/><path d="M19 1h11v4H19z" fill="#c9ccd0"/></svg></span>
    <span class="di run"><svg viewBox="0 0 30 30"><circle cx="15" cy="6" r="4" fill="#6f74c4"/><circle cx="24" cy="8" r="3" fill="#9fa3e0"/><path d="M12 11h10v12a6 6 0 0 1-10 2z" fill="#6f74c4"/><path d="M21 12h8v8a4 4 0 0 1-8 0z" fill="#9fa3e0"/><rect x="1" y="8" width="14" height="14" rx="1" fill="#4c50a8"/><text x="8" y="19" class="ij2">T</text></svg></span>
    <span class="dsep"></span>
    <span class="di run"><svg viewBox="0 0 30 30"><rect x="0" y="1" width="30" height="28" rx="2" fill="#232a2e"/><text x="1" y="12" class="term">$</text><rect x="9" y="4" width="5" height="10" fill="#2a9d4f"/></svg></span>
    <span class="di run"><svg viewBox="0 0 30 30"><circle cx="15" cy="15" r="14.500" fill="#fff"/><circle cx="15" cy="15" r="13.500" fill="#f2723a"/><path d="M10 21l9-9-3-3-6 8zM19 12l3-5" stroke="#fff" stroke-width="2" fill="none"/></svg></span>
    <span class="di run"><svg viewBox="0 0 30 30"><rect x="0" y="0" width="30" height="30" rx="3" fill="#4a4a4a"/><path d="M23 5L8 10v6l15-5zM23 13L8 18v6l15-5z" fill="#ff9800"/><path d="M8 10l15 6v-5L8 5z" fill="#f57c00" opacity=".5"/></svg></span>
    <span class="di run"><svg viewBox="0 0 30 30"><path d="M22 0l7 3v24l-7 3L5 19l-4 3-1-1v-12l1-1 4 3z" fill="#2e9ae0"/><path d="M22 0v30l7-3V3z" fill="#1d7fc4"/><path d="M22 7L11 15l11 8z" fill="#c4c4c4"/></svg></span>
    <span class="di run"><svg viewBox="0 0 30 30"><rect x="0" y="1" width="30" height="28" fill="#1b1b1b" stroke="#ddd" stroke-width=".6"/><rect x="0" y="1" width="30" height="2" fill="#bbb"/><path d="M4 8l4 2-4 2M9 14h4" stroke="#eee" fill="none"/></svg></span>
    <span class="di run"><svg viewBox="0 0 30 30"><circle cx="15" cy="15" r="14.500" fill="#eef6f8"/><circle cx="15" cy="15" r="12" fill="#1c95c4"/><circle cx="15" cy="15" r="9.500" fill="#eef6f8"/><path d="M24 10q2 12-11 14 9-1 9-14z" fill="#4ea64a"/><circle cx="13" cy="15" r="7" fill="#dfe8e8"/></svg></span>
    <span class="di run"><svg viewBox="0 0 30 30"><circle cx="15" cy="15" r="14.500" fill="#d81b6a"/><path d="M5 10h13l7 5-7 5H9l5-5z" fill="#fff"/><path d="M9 15h16" stroke="#d81b6a" stroke-width="1.500"/></svg></span>
    <span class="di run"><svg viewBox="0 0 30 30"><rect x="0" y="0" width="30" height="30" rx="7" fill="#3a87f5"/><rect x="6" y="10" width="12" height="10" rx="2" fill="#fff"/><path d="M19 14l5-4v10l-5-4z" fill="#fff"/></svg></span>
    <span class="di run"><svg viewBox="0 0 30 30"><circle cx="15" cy="15" r="14.500" fill="#fff"/><path d="M8 7h4l2-3h6q4 2 4 8t1 8q-2 3-5 3l-2 3-5-1q-2-5-4-6-4-1-4-6z" fill="#2fa84f"/></svg></span>
    <span class="di run"><svg viewBox="0 0 30 30"><rect x="0" y="0" width="30" height="30" fill="#b91a1a"/><path d="M5 24q4-2 7-8t1-12q3 5 6 8t7 4q-8-1-13 2t-8 6z" fill="none" stroke="#fff" stroke-width="1.200"/></svg></span>
    <span class="di run"><svg viewBox="0 0 30 30"><rect x="0" y="1" width="30" height="28" rx="1" fill="#122"/><path d="M3 17h7l2-5 2 9 3-13 2 9h8" stroke="#3a9d8a" fill="none"/><path d="M0 8h30M0 15h30M0 22h30M8 1v28M15 1v28M22 1v28" stroke="#1f3a3a" stroke-width=".5"/></svg></span>
    <span class="di run"><svg viewBox="0 0 30 30"><circle cx="14" cy="14" r="13.500" fill="#4a4f55"/><circle cx="14" cy="14" r="9" fill="#1d6fd1"/><circle cx="14" cy="14" r="6" fill="#7eb6ee"/><path d="M19 20l9 8-4 1-8-7z" fill="#33373b"/></svg></span>
    <span class="di run"><svg viewBox="0 0 30 30"><circle cx="15" cy="15" r="14.500" fill="#fff"/><circle cx="15" cy="15" r="13.800" fill="none" stroke="#d92b2b" stroke-width="1.400"/><path d="M15 4l3 6 7-1-4 6 4 6-7-1-3 6-3-6-7 1 4-6-4-6 7 1z" fill="#d92b2b"/><circle cx="15" cy="15" r="3.500" fill="#fff"/><circle cx="15" cy="15" r="1.500" fill="#f08a1c"/></svg></span>
    <span class="di run"><svg viewBox="0 0 30 30"><rect x="0" y="1" width="30" height="28" rx="1" fill="#111"/><text x="1" y="13" class="con">WARNIN</text><text x="1" y="24" class="con">AY 7:36</text></svg></span>
    <span class="di run"><svg viewBox="0 0 30 30"><rect x="2" y="1" width="24" height="22" fill="#fff" transform="rotate(-3 14 12)"/><rect x="4" y="3" width="20" height="17" fill="#4d8fcf" transform="rotate(-3 14 12)"/><path d="M4 17l8-5 11 5v3H4z" fill="#e6d6a8"/><circle cx="22" cy="22" r="6" fill="#ddd" stroke="#666" stroke-width="2"/><path d="M25 27l3 3" stroke="#6b4a2b" stroke-width="2.500"/></svg></span>
    <span class="dsep"></span>
    <span class="di"><svg viewBox="0 0 30 30"><path d="M1 8h11l2 3h15v18H1z" fill="#58a6d6"/><path d="M1 12h28v17H1z" fill="#6db7e3"/><rect x="11" y="1" width="9" height="9" fill="#eee"/><rect x="16" y="3" width="7" height="8" fill="#cdd6dd"/></svg></span>
    <span class="di"><svg viewBox="0 0 30 30"><path d="M3 6h24l-3 23H6z" fill="#7c8187"/><ellipse cx="15" cy="6" rx="12" ry="4" fill="#a6abb0"/><path d="M7 5l3-3 3 3M15 5l3-3 4 3" stroke="#555" fill="#ddd"/><circle cx="18" cy="4" r="1.500" fill="#d33"/></svg></span>
  </div>
  <div class="trash-tip">Trash</div>
</div>
</body>
</html>
```

FILE: styles.css
```css
*, *::before, *::after { box-sizing: border-box; }
html, body { margin: 0; height: 100%; overflow: hidden; background: #fff; }
body { font-family: Roboto, "Noto Sans", sans-serif; color: #3d3d3d; }
button { background: none; border: 0; padding: 0; margin: 0; color: inherit; font: inherit; }
p, h2 { margin: 0; }

.page { position: relative; width: 1900px; height: 957px; overflow: hidden; }

/* top bar */
.topbar { height: 45px; background: #2060b1; display: flex; align-items: center; position: relative; color: #fff; }
.tb-left { display: flex; height: 45px; }
.hbtn { height: 45px; display: flex; align-items: center; justify-content: center; flex: none; }
.w45 { width: 45px; }
.w63 { width: 63px; gap: 7px; padding-left: 2px; }
.w48 { width: 48px; }
.active { background: #1e3a66; }
.faded { opacity: .35; }
.hline { fill: none; stroke: #fff; stroke-width: 1.500; }
.doc-title { position: absolute; left: 897px; top: 0; height: 45px; display: flex; align-items: center; gap: 13px; font-size: 14px; font-weight: 500; }
.tb-right { margin-left: auto; display: flex; align-items: center; gap: 24px; margin-right: -6px; width: 216px; }
.quota { width: 22px; height: 22px; border-radius: 50%; background: #fff; color: #2060b1; font-size: 14px; display: flex; align-items: center; justify-content: center; }
.bell { position: relative; display: flex; }
.badge { position: absolute; left: 11px; top: -7px; width: 16px; height: 16px; border-radius: 50%; background: #ee1c25; color: #fff; font-size: 11px; font-weight: 700; display: flex; align-items: center; justify-content: center; }

.body { display: flex; height: 912px; }

/* left rail */
.rail { width: 45px; background: #ededed; display: flex; flex-direction: column; flex: none; }
.rail-item { height: 48px; display: flex; align-items: center; justify-content: center; flex: none; }
.rail-item.sep { border-bottom: 1px solid #1e3a66; }
.rail-item.current { background: #fff; border-left: 2px solid #2060b1; padding-right: 2px; }
.rail-item.push { margin-top: auto; }
.rail-item:last-child { height: 64px; justify-content: flex-start; padding-left: 6px; }
.rline { fill: none; stroke: #1e3a66; stroke-width: 1.500; }

/* visualizations panel */
.panel { width: 392px; flex: none; padding: 27px 0 0 20px; }
.panel-title { font-size: 14px; line-height: 18px; font-weight: 700; color: #333; }
.viz-tabs { display: flex; width: 351px; margin-top: 24px; height: 32px; border-bottom: 1px solid #e8e8e8; padding-left: 2px; }
.viz-tab { width: 172px; height: 31px; text-align: center; font-size: 14px; font-weight: 700; line-height: 26px; color: #333; }
.viz-tab + .viz-tab { margin-left: 3px; }
.viz-tab.on { border-bottom: 4px solid #2060b1; }
.viz-grid { display: grid; grid-template-columns: repeat(5, 70px); grid-auto-rows: 70px; margin-top: 14px; }
.tile { position: relative; display: flex; flex-direction: column; align-items: center; padding-top: 3px; text-align: center; font-size: 12px; line-height: 15px; color: #444; }
.viz { width: 28px; height: 28px; flex: none; margin-bottom: 7px; }
.tile.hl::after { content: ""; position: absolute; left: 8px; top: -6px; width: 64px; height: 73px; border: 7px solid #ff2d6c; border-radius: 4px; }
.d, .d circle { fill: #1f60b0; }
.m { fill: #7e9fd6; }
.l, .l circle { fill: #b0c5e6; }
.w { fill: #fff; }
.ws { fill: #fff; opacity: .5; }
.b { fill: none; stroke: #1f60b0; stroke-width: 1.300; }
.b1 { fill: none; stroke: #1f60b0; stroke-width: 1; }
.b2 { fill: #fff; stroke: #1f60b0; stroke-width: 2; }
.b2n { fill: none; stroke: #1f60b0; stroke-width: 2; }
.b3 { fill: none; stroke: #1f60b0; stroke-width: 3; }
.bl { fill: none; stroke: #9db6df; stroke-width: 1.500; }
.bl3 { fill: none; stroke: #9db6df; stroke-width: 3; }
.bt { fill: #fff; stroke: #5b83c6; stroke-width: .8; }
.kpi { font: 7px Roboto, sans-serif; fill: #1f60b0; }
.sumnum { font: 6.500px Roboto, sans-serif; fill: #1f60b0; }
.abc { font: 9px Roboto, sans-serif; fill: #1f60b0; }
.tiny { font: 3.500px Roboto, sans-serif; fill: #6f90c9; }

.gutter { width: 8px; flex: none; background: #ededed; position: relative; }
.grip { display: block; width: 4px; height: 15px; border-left: 1px solid #666; border-right: 1px solid #666; }
.gutter .grip { position: absolute; top: 450px; left: 2px; }

/* main */
.main { flex: 1; min-width: 0; display: flex; flex-direction: column; }
.toolbar { height: 41px; border-bottom: 2px solid #ededed; display: flex; flex: none; font-size: 14px; color: #666; }
.tool { height: 39px; display: flex; align-items: center; justify-content: center; gap: 8px; border-right: 1px solid #f0f0f0; flex: none; padding-top: 2px; }
.w40 { width: 41px; }
.w72 { width: 71px; }
.w41 { width: 41px; }
.w42b { width: 42px; }
.w101 { width: 101px; }
.w100 { width: 100px; }
.w105 { width: 105px; }
.lb { border-left: 0; }
.nob { border-right: 0; }
.tool-gap { flex: 1; }
.tool.txt { justify-content: flex-start; padding-left: 10px; border-right: 0; gap: 9px; }
.sel { background: #c4c4c4; color: #222; }
.tline { fill: none; stroke: #666; stroke-width: 1.100; }
.tfill { fill: #666; }
.k { fill: #222; }
.ko { fill: none; stroke: #222; }
.tool > span { white-space: nowrap; }

.filters { height: 73px; border-bottom: 2px solid #ededed; display: flex; flex: none; }
.fzone { position: relative; display: flex; align-items: center; height: 71px; }
.fz-left { width: 737px; padding-right: 51px; }
.fz-right { flex: 1; padding-right: 24px; }
.fgutter { width: 8px; flex: none; background: #ededed; display: flex; align-items: center; justify-content: center; padding-bottom: 17px; }
.flabel { width: 100px; flex: none; display: flex; flex-direction: column; align-items: center; gap: 3px; font-size: 10.500px; line-height: 12px; color: #1e3a66; padding-top: 4px; }
.funnel { fill: #1e3a66; }
.fhint { flex: 1; text-align: center; font-size: 14px; color: #a3a3a3; }
.dots { position: absolute; right: 29px; top: 14px; display: flex; gap: 3px; }
.fz-right .dots { right: 4px; }
.dots i { width: 3px; height: 3px; border-radius: 50%; background: #222; }

.work { flex: 1; display: flex; min-height: 0; }
.stage { width: 1151px; flex: none; border-right: 1px solid #ededed; padding: 0 0 0 13px; }
.tabbar { width: 1127px; height: 42px; border-bottom: 2px solid #ededed; display: flex; }
.tab { width: 80px; height: 41px; border-bottom: 2px solid #2060b1; text-align: center; font-size: 14px; font-weight: 700; line-height: 47px; color: #333; }
.addtab { margin: 13px 0 0 15px; }
.plusbg { fill: #333; }
.plusfg { stroke: #fff; stroke-width: 2; fill: none; }
.canvas {
  margin: 12px 0 0 10px; width: 1105px; height: 622px; border: 2px solid #dedede;
  background-color: #fff;
  background-image: linear-gradient(#f5f5f5 1px, transparent 1px), linear-gradient(90deg, #f5f5f5 1px, transparent 1px);
  background-size: 11px 11px;
  padding: 53px 0 0 83px;
}
.widget { position: relative; width: 480px; height: 409px; border: 2px solid #2060b1; background: #fff; padding: 22px 0 0 8px; }
.map { display: block; }
.land path { fill: #ececec; stroke: #dedede; stroke-width: 1.500; }
.holes path { fill: #fff; stroke: #dedede; stroke-width: 1; }
.borders path { fill: none; stroke: #a9a9a9; stroke-width: 1.800; }
.seas { fill: none; stroke: #c9c9c9; stroke-width: 3; }
.mlabel text { font: 500 32px Roboto, sans-serif; fill: #6b6b6b; stroke: #fff; stroke-width: 4px; paint-order: stroke; stroke-opacity: .55; }
.ocean text { font: italic 300 48px Roboto, sans-serif; fill: #c2c2c2; }
.mbtn { fill: #fff; stroke: #eee; stroke-width: 2; }
.lyr path { fill: #fff; stroke: #000; stroke-width: 6; }
.msep { stroke: #ddd; stroke-width: 2; }
.mzoom { stroke: #333; stroke-width: 8; fill: none; }
.msearch { fill: none; stroke: #222; stroke-width: 3.500; }
.h { position: absolute; width: 7px; height: 7px; background: #fff; border: 1px solid #2060b1; }
.h1 { left: -5.500px; top: -5.500px; }
.h2 { right: -5.500px; top: 197px; }
.h3 { left: -5.500px; top: 197px; }
.h4 { left: -5.500px; bottom: -5.500px; }
.h5 { left: 233px; bottom: -5.500px; }
.h6 { right: -5.500px; bottom: -5.500px; }
.wbtn { position: absolute; width: 24px; height: 24px; background: #fff; border: 1px solid #2060b1; display: flex; align-items: center; justify-content: center; top: -13px; }
.move { left: 225px; }
.expand { right: -13px; }
.wmove { fill: none; stroke: #2060b1; stroke-width: 1.600; }
.wh { fill: #2060b1; stroke: none; }
.wexp { fill: none; stroke: #2060b1; stroke-width: 1.300; }
.wf { fill: #2060b1; stroke: none; }

/* fields panel */
.fields { flex: 1; min-width: 0; padding-left: 8px; font-size: 14px; color: #444; overflow: hidden; }
.req { height: 50px; font-size: 12px; font-weight: 700; color: #333; padding-top: 17px; line-height: 16px; white-space: nowrap; }
.star { color: #ee1c25; font-size: 15px; font-weight: 700; }
.sect { border-bottom: 2px solid #eee; width: 340px; height: 65px; }
.sect-h { display: flex; align-items: center; height: 63px; padding: 10px 0 0 9px; gap: 10px; }
.sect.open .sect-h { height: 42px; padding-top: 0; }
.sect.open { height: 160px; }
.sect-h svg { flex: none; }
.fline { fill: none; stroke: #555; stroke-width: 1; }
.blue { fill: none; stroke: #2060b1; stroke-width: 1.100; flex: none; }
.slot { display: flex; align-items: center; height: 20px; white-space: nowrap; color: #333; font-weight: 700; }
.slot b { font-weight: 700; }
.s1 { margin-top: 14px; padding-left: 49px; gap: 10px; }
.s2 { margin-top: 36px; padding-left: 48px; gap: 9px; }
.st2 { margin-left: -3px; }
.sect.local { height: 69px; display: flex; align-items: center; padding: 3px 0 0 17px; gap: 10px; color: #333; }
.info { display: flex; padding: 18px 0 0 17px; gap: 10px; width: 310px; line-height: 20px; }
.info svg { flex: none; margin-top: 2px; }
.info p { width: 280px; flex: none; }

/* overlays */
.arrow { position: absolute; left: 195px; top: 372px; }
.arrow path { fill: #ff2d6c; filter: drop-shadow(0 1px 1px rgba(0,0,0,.2)); }
.fade { position: absolute; left: 0; right: 0; bottom: 47px; height: 50px; background: linear-gradient(rgba(235,235,235,0), rgba(232,232,232,.9)); }
.dock { position: absolute; left: 24px; top: 910px; width: 1864px; height: 47px; background: #c4c4c4; border: 1px solid #8c8c8c; border-bottom: 0; border-radius: 6px 6px 0 0; display: flex; gap: 7.250px; padding: 6px 0 0 5px; }
.di { position: relative; width: 30px; height: 30px; flex: none; }
.di svg { display: block; width: 30px; height: 30px; overflow: visible; }
.di.run::after { content: ""; position: absolute; left: 13.500px; top: 35px; width: 3px; height: 3px; background: #fff; }
.dsep { width: 1px; height: 38px; background: #f0f0f0; flex: none; margin: -1px 3px 0 6px; }
.dbadge { font: 700 6.500px Roboto, sans-serif; fill: #fff; text-anchor: middle; }
.cal1 { font: 5px Roboto, sans-serif; fill: #fff; text-anchor: middle; }
.cal2 { font: 14px Roboto, sans-serif; fill: #222; text-anchor: middle; }
.tv { font: 700 12px Roboto, sans-serif; fill: #fff; text-anchor: middle; }
.ij { font: 700 11px Roboto, sans-serif; fill: #fff; }
.ij2 { font: 700 11px Roboto, sans-serif; fill: #fff; text-anchor: middle; }
.term { font: 700 11px "Liberation Mono", monospace; fill: #2dd35f; }
.con { font: 700 7.500px "Liberation Mono", monospace; fill: #e7b800; }
.trash-tip { position: absolute; left: 1835px; top: 867px; width: 63px; height: 27px; background: #6a6a6a; border: 1px solid #3a3a3a; border-radius: 4px; color: #fff; font-size: 14px; line-height: 25px; text-align: center; }
.trash-tip::after { content: ""; position: absolute; left: 23px; top: 25px; border: 7px solid transparent; border-top: 9px solid #6a6a6a; border-bottom: 0; }
```
